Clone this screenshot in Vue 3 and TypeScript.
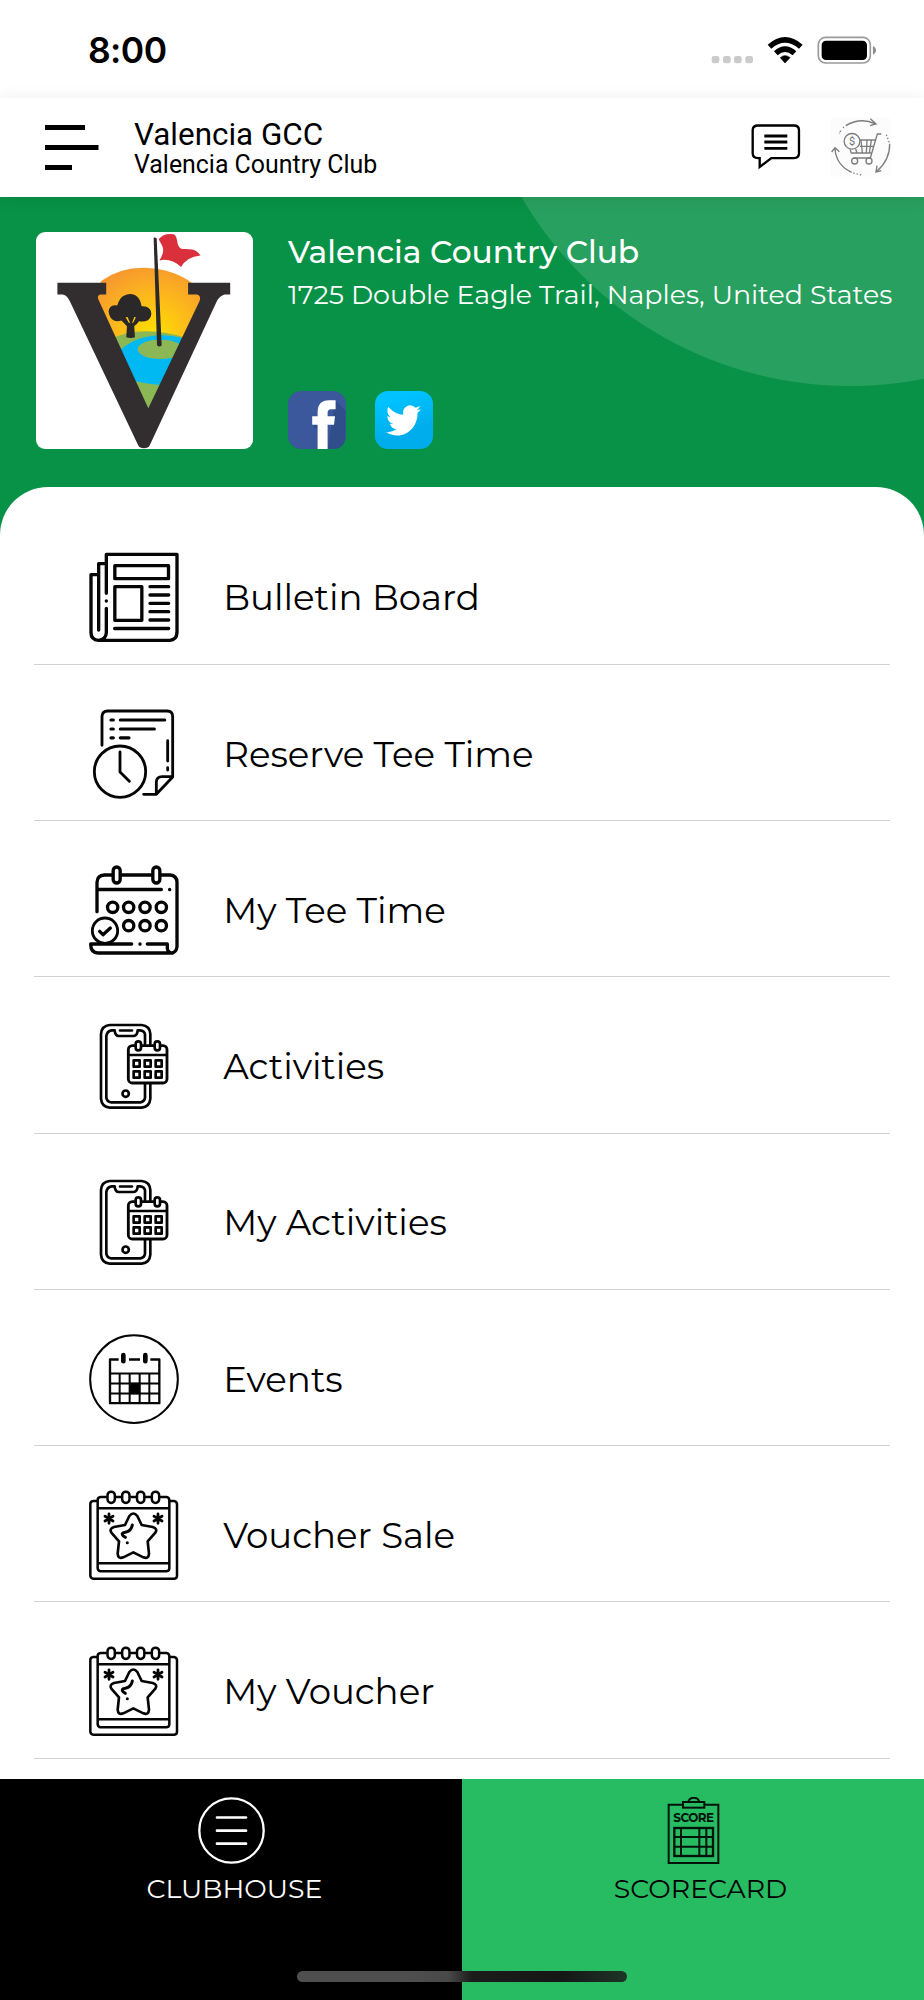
<script setup lang="ts">
type IconName = 'news' | 'reserve' | 'calendar' | 'phone' | 'events' | 'voucher'

interface MenuItem {
  label: string
  icon: IconName
}

const items: MenuItem[] = [
  { label: 'Bulletin Board', icon: 'news' },
  { label: 'Reserve Tee Time', icon: 'reserve' },
  { label: 'My Tee Time', icon: 'calendar' },
  { label: 'Activities', icon: 'phone' },
  { label: 'My Activities', icon: 'phone' },
  { label: 'Events', icon: 'events' },
  { label: 'Voucher Sale', icon: 'voucher' },
  { label: 'My Voucher', icon: 'voucher' },
]

const viewBoxes: Record<IconName, string> = {
  news: '57 69 270 270',
  reserve: '57 58 270 270',
  calendar: '57 46 270 270',
  phone: '57 35 270 270',
  events: '57 42.5 270 270',
  voucher: '57 46 270 270',
}
</script>

<template>
  <div class="screen">
    <div class="status">
      <span class="time">8:00</span>
      <svg class="status-icons" viewBox="90 105 505 90">
        <g fill="#cbcbcb">
          <rect x="95" y="168" width="23" height="22" rx="7" />
          <rect x="129" y="168" width="23" height="22" rx="7" />
          <rect x="162" y="168" width="23" height="22" rx="7" />
          <rect x="196" y="168" width="23" height="22" rx="7" />
        </g>
        <path d="M263 134 Q315 88 368 134 L357 146 Q315 110 274 146 Z" />
        <path d="M282 154 Q315 124 349 154 L338 166 Q315 146 293 166 Z" />
        <path d="M301 173 Q315 161 330 173 L315 189 Z" stroke="#000" stroke-width="2" stroke-linejoin="round" />
        <rect x="415" y="112" width="156" height="77" rx="22" fill="none" stroke="#9a9a9a" stroke-width="5" />
        <rect x="425" y="122" width="136" height="58" rx="13" />
        <path d="M579 138 Q588 142 588 151 Q588 160 579 164 Z" fill="#8c8c8c" />
      </svg>
    </div>

    <header class="header">
      <svg class="burger" viewBox="0 0 54 46">
        <path d="M0 2.6H40M0 22.6H53.5M0 42.6H27" stroke="#000" stroke-width="5" />
      </svg>
      <div class="titles">
        <div class="title">Valencia GCC</div>
        <div class="subtitle">Valencia Country Club</div>
      </div>
      <svg class="message" viewBox="212 370 150 142" fill="none" stroke="#000">
        <path d="M233 377.500H341Q356 377.500 356 392V461Q356 475.500 341 475.500H273L238 502V475.500H233Q217 475.500 217 461V392Q217 377.500 233 377.500Z" stroke-width="7" />
        <path d="M252 409H321M252 427H321M252 446H321" stroke-width="8.500" />
      </svg>
      <svg class="cart" viewBox="452 352 180 180" fill="none" stroke="#7d7d7d" stroke-width="4">
        <rect x="452" y="355" width="178" height="176" fill="#fcfcfc" stroke="none" />
        <path d="M496 378Q540 352 584 372M570 357L587 373L569 378" />
        <path d="M491 382l-5 4M481 393l-4 8" stroke-dasharray="4 3" />
        <path d="M464 448Q468 497 514 518M454 457L464 444L477 456" />
        <path d="M519 520L543 526" stroke-dasharray="4 6" />
        <path d="M628 432Q629 480 590 514M590 498L587 517L603 513" />
        <path d="M618 405L627 429" stroke-dasharray="4 6" />
        <path d="M603 403H591L570 475H520M539 421H585M539 440H580M509 449L513 460H573M542 422L546 460M560 422L558 460M573 422L567 460M526 448L530 460" />
        <circle cx="515" cy="425" r="23.500" fill="#fcfcfc" />
        <text x="515" y="437" text-anchor="middle" font-family="Roboto, sans-serif" font-size="33" fill="#707070" stroke="none">$</text>
        <circle cx="523" cy="484" r="9" />
        <circle cx="566" cy="484" r="9" />
      </svg>
    </header>

    <section class="hero">
      <svg class="logo" viewBox="48 67 648 648">
        <defs>
          <radialGradient id="sun" gradientUnits="userSpaceOnUse" cx="400" cy="370" r="210">
            <stop offset="0" stop-color="#ffe000" />
            <stop offset="0.450" stop-color="#fdbf17" />
            <stop offset="1" stop-color="#f7982f" />
          </radialGradient>
          <clipPath id="inner">
            <path d="M225 150H530L548 255L384 597L228 262Z" />
          </clipPath>
        </defs>
        <g clip-path="url(#inner)">
          <path d="M225 250Q240 219 244 213Q300 173 372 174Q455 176 516 220L560 255V420H225Z" fill="url(#sun)" />
          <path d="M260 392Q360 340 500 384V600H260Z" fill="#8cb755" />
          <path d="M290 430Q340 375 430 376Q465 377 500 388V520Q420 532 340 512Z" fill="#00b9f2" />
          <ellipse cx="420" cy="418" rx="68" ry="29" fill="#8cb755" />
        </g>
        <path d="M112 219H258V254H240Q229 258 235 270L384 594L538 272Q542 257 530 254H503V219H629V254H612Q598 258 590 272L388 706Q384 714 371 714Q358 714 354 706L150 276Q142 257 128 254H112Z" fill="#322e2f" />
        <path d="M400 84Q405 82 409 86L424 406Q417 413 410 406Z" fill="#2b2829" />
        <path d="M318 382L320 349Q312 340 303 332Q282 339 270 321Q260 300 272 290Q281 285 291 287Q298 264 311 258Q327 248 345 256Q360 264 364 289Q386 288 392 304Q396 321 383 331Q370 337 356 334Q351 343 342 348L344 382Q331 386 318 382ZM316 322L325 338L330 340L322 321ZM342 321L335 340L339 338L347 322Z" fill="#2b2829" fill-rule="evenodd" />
        <path d="M415 89Q431 69 460 74C475 82 466 108 482 117C503 120 526 113 540 137Q498 141 482 172Q452 144 417 152Q436 124 424 105Z" fill="#d9303b" />
      </svg>
      <div class="club">
        <div class="club-name">Valencia Country Club</div>
        <div class="address">1725 Double Eagle Trail, Naples, United States</div>
        <div class="social">
          <svg viewBox="0 0 58 58">
            <rect width="58" height="58" rx="13" fill="#3a589b" />
            <path d="M47.500 9.500L57.500 20V45Q57 58 45 58H39.600Z" fill="#304e8a" />
            <path d="M24.200 33.700L29.600 39V30Z" fill="#304e8a" />
            <path d="M29.600 58V33.700H24.200V25.300H29.600V21Q29.600 9.500 41 9.300H47.600V18.300H43Q39.600 18.300 39.600 22V25.300H47L46 33.700H39.600V58Z" fill="#fff" />
          </svg>
          <svg viewBox="0 0 58 58">
            <defs>
              <linearGradient id="sky" x1="0" y1="0" x2="0.300" y2="1">
                <stop offset="0.200" stop-color="#00c3ff" />
                <stop offset="0.800" stop-color="#00adec" />
              </linearGradient>
            </defs>
            <rect width="58" height="58" rx="13" fill="url(#sky)" />
            <path transform="translate(11 11) scale(1.460 1.540)" d="M23.950 4.570a10 10 0 0 1-2.820.77 4.960 4.960 0 0 0 2.160-2.720 9.900 9.900 0 0 1-3.120 1.190 4.920 4.920 0 0 0-8.380 4.480C7.690 8.090 4.070 6.130 1.640 3.160a4.820 4.820 0 0 0-.67 2.480c0 1.710.87 3.210 2.190 4.100a4.900 4.900 0 0 1-2.230-.62v.06a4.920 4.920 0 0 0 3.950 4.830 5 5 0 0 1-2.210.08 4.940 4.940 0 0 0 4.600 3.420A9.870 9.870 0 0 1 0 19.540a14 14 0 0 0 7.550 2.210c9.050 0 14-7.500 14-13.980 0-.21 0-.42-.02-.63a9.940 9.940 0 0 0 2.420-2.570z" fill="#fff" />
          </svg>
        </div>
      </div>
    </section>

    <main class="sheet">
      <div v-for="item in items" :key="item.label" class="row">
        <svg class="icon" :viewBox="viewBoxes[item.icon]" fill="none" stroke="#050505" stroke-linecap="round" stroke-linejoin="round">
          <g v-if="item.icon === 'news'" stroke-width="10">
            <path d="M109 193V76H321V311Q320 333 299 334H86Q63 332 63 311V137H82M86 303V104H105M109 238V311Q108 332 86 334" />
            <path d="M109 215.500V216" />
            <rect x="134.500" y="110" width="161" height="39" />
            <rect x="134.500" y="173" width="81" height="101" />
            <path d="M240 173H296M240 198H296M240 223H296M240 248H296M240 273H296M134 298.500H296" />
          </g>
          <g v-else-if="item.icon === 'reserve'" stroke-width="8.500">
            <path d="M96 167V80Q97 64 113 64H292Q308 65 308 80V262L259 314H221M259 311V277Q260 261 276 261H306" />
            <path d="M293 153V214M293 234V241M150 187V247L178 275" />
            <path d="M123 91H130M151 91H284M123 118H130M151 118H253M123 144.500H130M151 144.500H177" stroke-width="9.500" />
            <circle cx="150" cy="246" r="77" />
          </g>
          <g v-else-if="item.icon === 'calendar'" stroke-width="10">
            <path d="M81 186V98Q82 77 103 76H125M155 76H244M274 76H300Q321 78 321 98V291Q319 309 304 310H84Q62 310 62 283H185M232 283H292V297Q294 309 307 310M81 119.500H274" />
            <path d="M299 119.500V120M210 283V283.500" />
            <rect x="129.500" y="52" width="21" height="48" rx="10.500" />
            <rect x="248.500" y="52" width="21" height="48" rx="10.500" />
            <circle v-for="x in [128, 176, 225, 274]" :key="x" :cx="x" cy="173" r="15.500" />
            <circle v-for="x in [176, 225, 274]" :key="'b' + x" :cx="x" cy="228" r="15.500" />
            <circle cx="105" cy="243" r="38" stroke-width="8.500" fill="#fff" />
            <path d="M89 245L99 255L121 235" />
          </g>
          <g v-else-if="item.icon === 'phone'" stroke-width="8">
            <path d="M241 104V74Q239 49 215 47H119Q95 49 93 74V268Q95 293 119 295H215Q239 293 241 268V225" />
            <path d="M225 104V75Q223 64 210 63H203Q202 79 191 80H145Q135 78 134 63H125Q111 65 109 80V265Q111 277 124 279H211Q224 277 225 265V225" />
            <path d="M150 63.500H186M177 137H290" />
            <rect x="175" y="109" width="116" height="112" rx="12" stroke-width="8.500" />
            <rect x="197" y="96" width="16" height="27" rx="8" fill="#fff" />
            <rect x="254" y="96" width="16" height="27" rx="8" fill="#fff" />
            <template v-for="y in [153, 186]" :key="y">
              <rect v-for="x in [191, 224, 257]" :key="x" :x="x" :y="y" width="18" height="19" />
            </template>
            <circle cx="167" cy="253" r="9.500" />
          </g>
          <g v-else-if="item.icon === 'events'" stroke-width="6" stroke-linecap="butt">
            <circle cx="192" cy="178" r="131.500" stroke-width="6" />
            <path d="M146 119H120V250H268V119H241M177 119H210" stroke-width="7" />
            <path d="M160 106V124M226 106V124" stroke-width="14" stroke-linecap="round" />
            <path d="M120 161H268M120 191H268M120 221H268M149 161V250M179 161V250M209 161V250M238 161V250" />
            <rect x="180" y="192" width="28" height="28" fill="#000" />
          </g>
          <g v-else stroke-width="7.500">
            <path d="M83 79H70Q61 80 61 88V303Q62 312 70 312H313Q321 311 321 303V88Q320 80 312 79H299M83 101H298M83 266H298M107 67H92Q83 68 83 76V281Q84 289 92 290H290Q298 289 298 281V76Q297 68 290 67H273M139 67H152M184 67H197M228 67H241" />
            <rect v-for="x in [112.500, 156.500, 201, 245.500]" :key="x" :x="x" y="51" width="22" height="34" rx="11" />
            <path d="M178 124Q190 109 202 124L215 151L248 157Q264 162 256 174L233 200L237 237Q236 254 220 248L190 233L160 248Q144 254 143 237L147 200L124 174Q117 162 132 157L165 151Z" stroke-width="8" />
            <path d="M187 151Q184 169 166 173Q151 175 160 184L166 188M172 204V204.500" stroke-width="9" />
            <path d="M117 118V146M105 125L129 139M129 125L105 139M264 118V146M252 125L276 139M276 125L252 139" stroke-width="8.500" />
          </g>
        </svg>
        <span class="label">{{ item.label }}</span>
      </div>
    </main>

    <footer class="footer">
      <div class="tab clubhouse">
        <svg viewBox="0 0 67 67" fill="none" stroke="#fff" stroke-linecap="round">
          <circle cx="33.500" cy="33.500" r="32.200" stroke-width="2.300" />
          <path d="M19 20.500H48M19 33.700H48M19 46.700H48" stroke-width="2.700" />
        </svg>
        <span>CLUBHOUSE</span>
      </div>
      <div class="tab scorecard">
        <svg viewBox="593 171 201 201" fill="none" stroke="#02140a" stroke-width="6">
          <path d="M661 194.500H619V369H768V194.500H728M678 185Q682 173 694 173Q707 173 711 185" />
          <rect x="662" y="186" width="64" height="17" />
          <text x="694" y="246" text-anchor="middle" textLength="122" font-family="Montserrat, sans-serif" font-weight="700" font-size="36" fill="#02140a" stroke="none">SCORE</text>
          <rect x="636" y="264" width="116" height="84" stroke-width="7" />
          <path d="M636 291H752M636 320H752M656 264V348M711 264V348M732 264V348" />
        </svg>
        <span>SCORECARD</span>
      </div>
      <div class="home-bar"></div>
    </footer>
  </div>
</template>

<style>
body {
  margin: 0;
  background: #fff;
}
</style>

<style scoped>
.screen {
  width: 924px;
  height: 2000px;
  display: flex;
  flex-direction: column;
  overflow: hidden;
  background: #fff;
  color: #000;
  font-family: Montserrat, "Open Sans", sans-serif;
}
svg {
  display: block;
  flex: none;
}
.status {
  flex: none;
  height: 98px;
  box-sizing: border-box;
  padding: 29px 45.500px 0 88px;
  display: flex;
  justify-content: space-between;
}
.time {
  font: 600 35.500px/44px Inter, sans-serif;
  letter-spacing: -0.600px;
}
.status-icons {
  width: 168.300px;
  height: 30px;
  margin-top: 6px;
}
.header {
  flex: none;
  position: relative;
  z-index: 1;
  height: 98.600px;
  box-sizing: border-box;
  padding: 0 33px 0 45px;
  display: flex;
  align-items: flex-start;
  background: #fff;
  box-shadow: 0 2px 16px rgba(0, 0, 0, 0.090);
}
.burger {
  width: 54px;
  height: 46px;
  margin-top: 27.300px;
}
.titles {
  flex: 1;
  padding: 20px 0 0 35px;
  font-family: Roboto, sans-serif;
}
.title {
  font-size: 31.400px;
  line-height: 34px;
}
.subtitle {
  font-size: 24.900px;
  line-height: 25px;
}
.message {
  width: 50px;
  height: 47.300px;
  margin-top: 25.300px;
}
.cart {
  width: 60px;
  height: 60px;
  margin: 19.300px 0 0 30px;
}
.hero {
  flex: none;
  height: 338px;
  box-sizing: border-box;
  padding: 35.500px 0 0 36px;
  display: flex;
  background: radial-gradient(circle at 850px -191px, rgba(255, 255, 255, 0.130) 379.500px, transparent 380.500px) #089247;
}
.logo {
  width: 216.600px;
  height: 216.600px;
  border-radius: 9px;
  background: #fff;
}
.club {
  padding-left: 35.400px;
  color: #fff;
  white-space: nowrap;
}
.club-name {
  font-size: 31.300px;
  line-height: 40px;
  font-weight: 500;
}
.address {
  margin-top: 6px;
  font-size: 26.830px;
  line-height: 34px;
}
.social {
  display: flex;
  gap: 29px;
  margin-top: 78.800px;
}
.social svg {
  width: 58px;
  height: 58px;
}
.sheet {
  flex: none;
  position: relative;
  height: 1292.400px;
  box-sizing: border-box;
  margin-top: -48px;
  padding: 22px 34px 0;
  border-radius: 48px 48px 0 0;
  background: #fff;
}
.row {
  height: 156.280px;
  box-sizing: border-box;
  padding: 22.400px 0 0 55px;
  display: flex;
  align-items: center;
  border-bottom: 1px solid #d2d2d2;
}
.icon {
  width: 90px;
  height: 90px;
}
.label {
  margin: 2px 0 0 44.200px;
  font-size: 35.600px;
  line-height: 44px;
}
.footer {
  flex: none;
  position: relative;
  height: 221px;
  display: flex;
}
.tab {
  flex: 1;
  display: flex;
  flex-direction: column;
  align-items: center;
  padding-top: 18px;
  font-size: 26.800px;
  line-height: 34px;
}
.tab svg {
  width: 67px;
  height: 67px;
}
.tab span {
  margin: 8px 0 0 7px;
}
.clubhouse {
  background: #000;
  color: #fff;
}
.scorecard {
  background: #27bb62;
}
.tab.scorecard span {
  margin-left: 15px;
}
.home-bar {
  position: absolute;
  left: 297px;
  bottom: 18px;
  width: 330px;
  height: 11px;
  border-radius: 6px;
  background: linear-gradient(90deg, #4e4e4e 0 35%, #484848 46%, #1c1c1c 53%, #161616 80%, #1d3527 100%);
}
</style>
